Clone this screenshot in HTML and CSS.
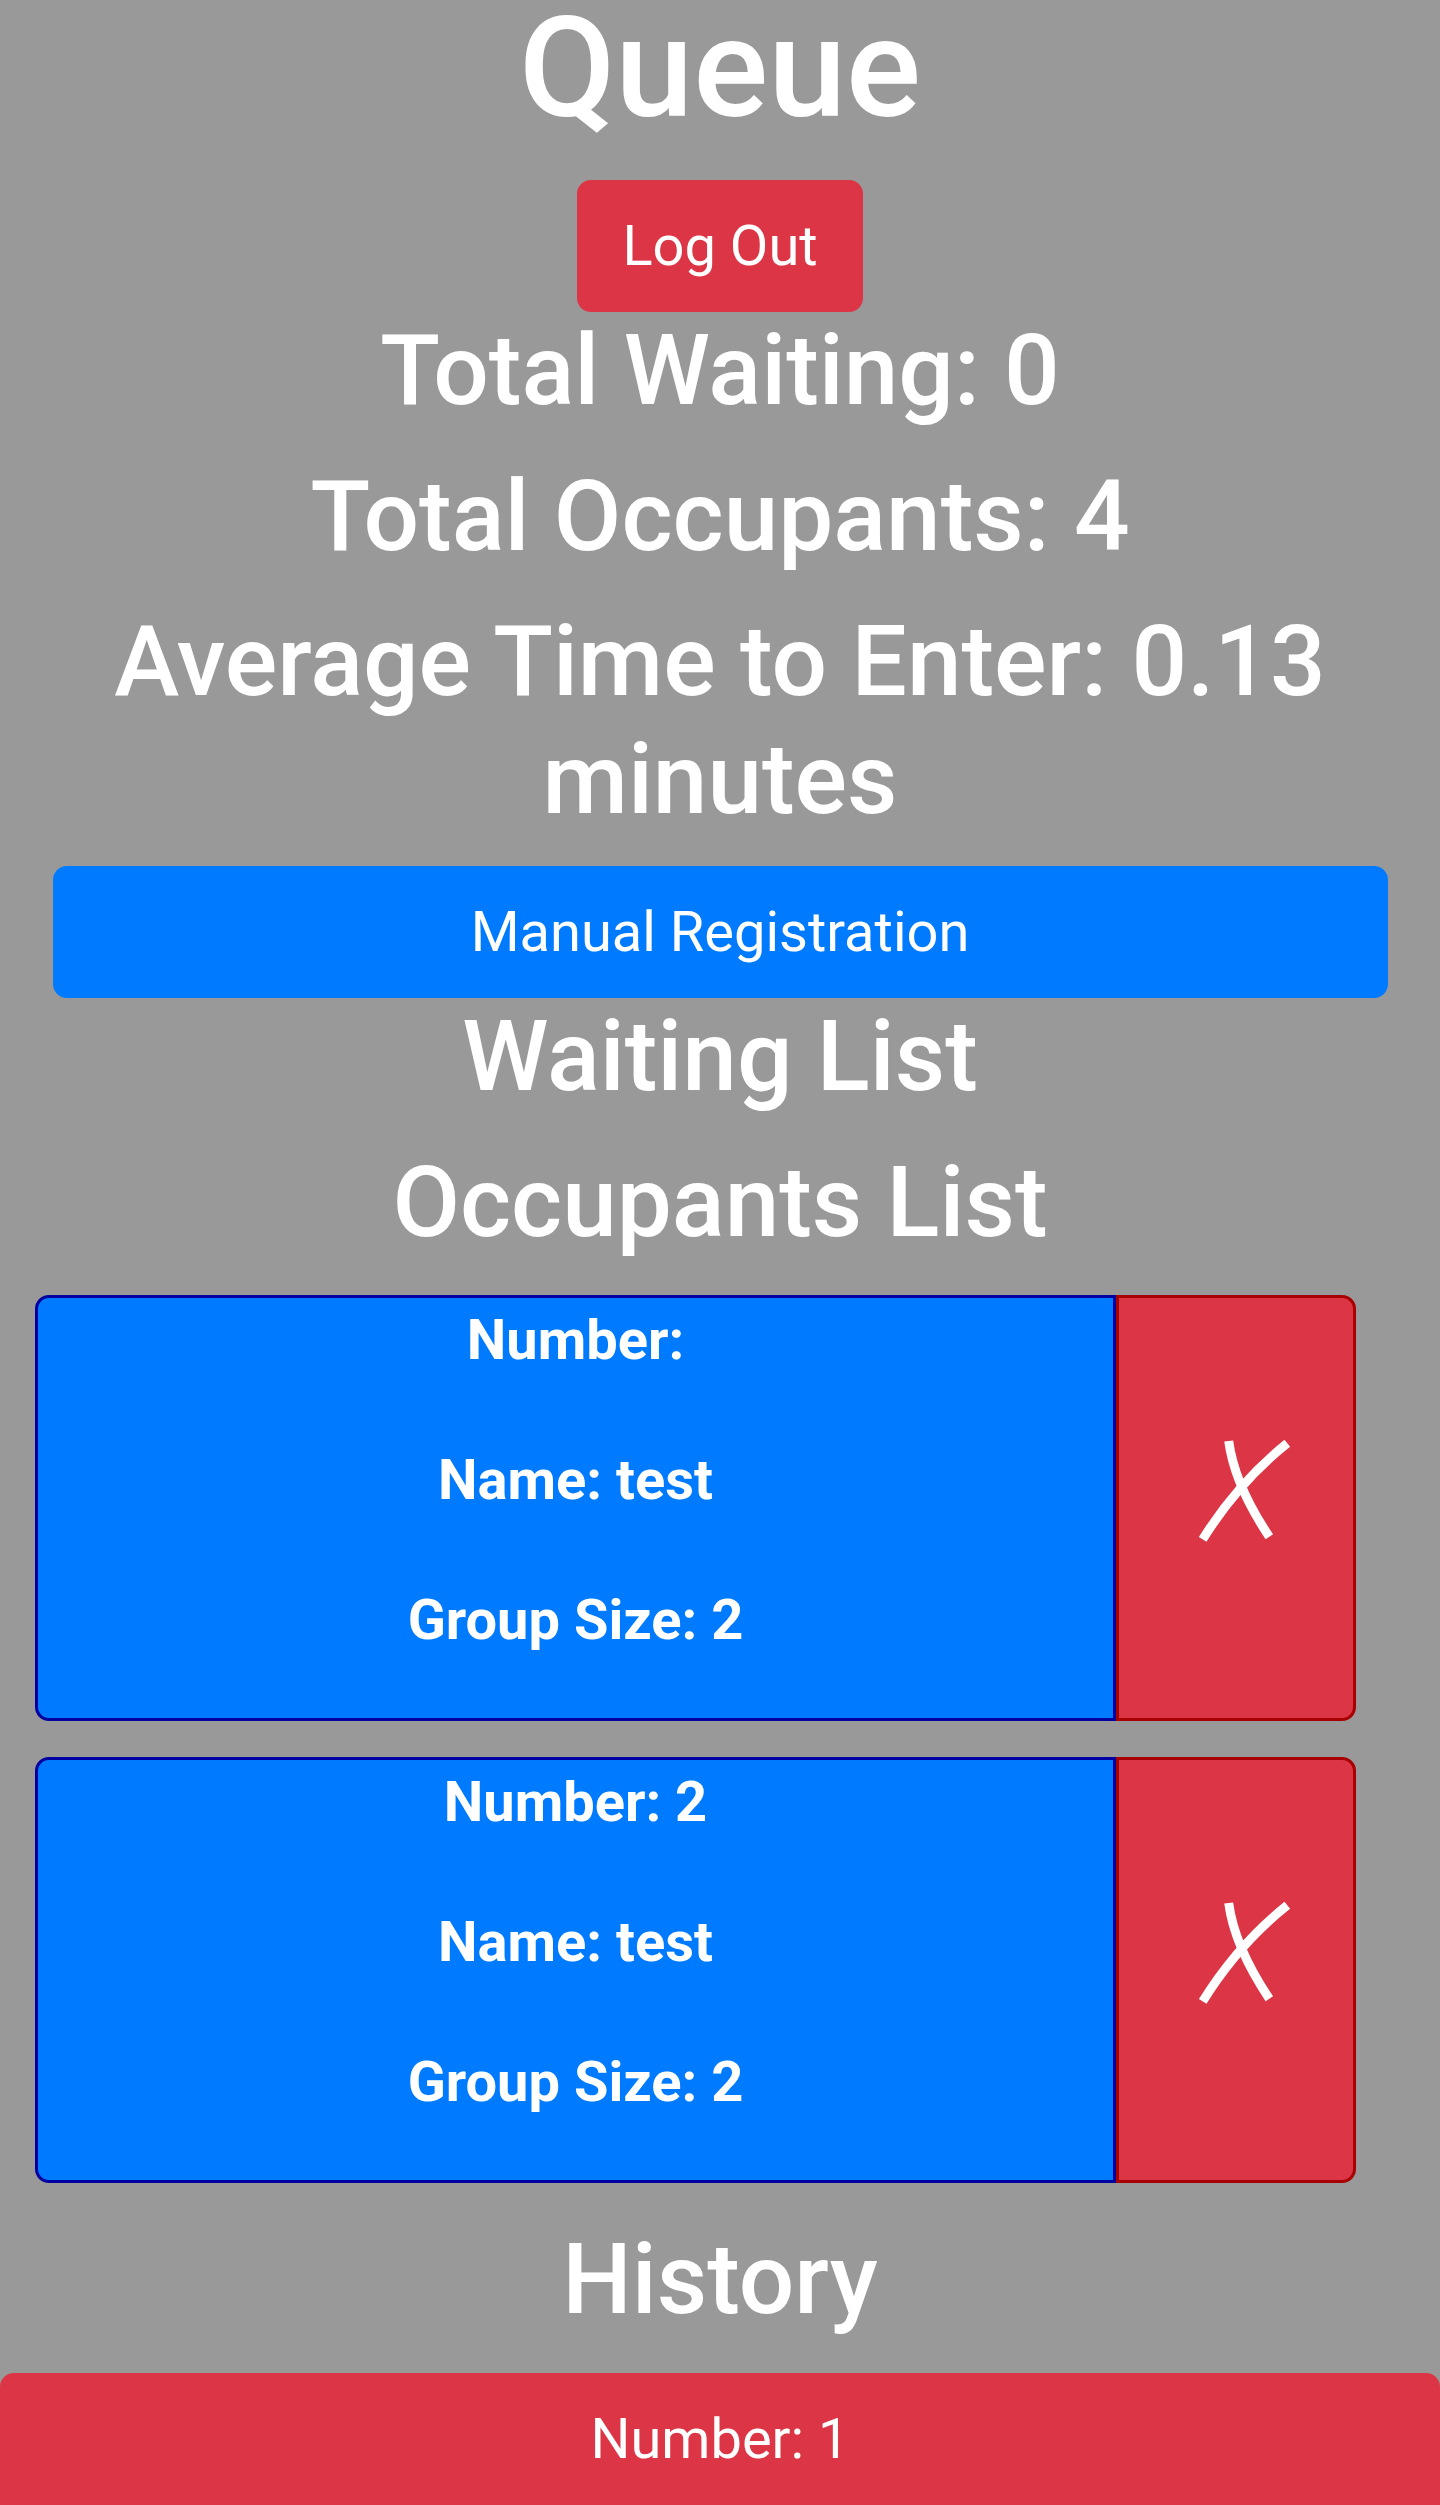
FILE: index.html
```html
<!DOCTYPE html>
<html lang="en">
<head>
<meta charset="utf-8">
<title>Queue</title>
<link rel="stylesheet" href="styles.css">
</head>
<body>
<main class="page">
  <h1 class="title">Queue</h1>
  <div class="logout-wrap"><button class="btn btn-danger">Log Out</button></div>
  <h3 class="heading">Total Waiting: 0</h3>
  <h3 class="heading">Total Occupants: 4</h3>
  <h3 class="heading">Average Time to Enter: 0.13 minutes</h3>
  <div class="container">
    <button class="btn btn-primary btn-block">Manual Registration</button>
  </div>
  <h3 class="heading">Waiting List</h3>
  <h3 class="heading">Occupants List</h3>
  <div class="occupants">
    <div class="card">
      <div class="card-info">
        <p>Number: </p>
        <p>Name: test</p>
        <p>Group Size: 2</p>
      </div>
      <div class="card-del">
        <svg class="x-icon" width="100" height="112" viewBox="0 0 100 112" aria-hidden="true">
          <path d="M33.7 5 Q39.4 48.5 74.3 100.7" />
          <path d="M92.3 7.3 Q43.4 46.1 7.7 103.3" />
        </svg>
      </div>
    </div>
    <div class="card">
      <div class="card-info">
        <p>Number: 2</p>
        <p>Name: test</p>
        <p>Group Size: 2</p>
      </div>
      <div class="card-del">
        <svg class="x-icon" width="100" height="112" viewBox="0 0 100 112" aria-hidden="true">
          <path d="M33.7 5 Q39.4 48.5 74.3 100.7" />
          <path d="M92.3 7.3 Q43.4 46.1 7.7 103.3" />
        </svg>
      </div>
    </div>
  </div>
  <h3 class="heading">History</h3>
  <div class="history">
    <div class="history-item">
      <p>Number: 1</p>
    </div>
  </div>
</main>
</body>
</html>
```

FILE: styles.css
```css
html, body {
  margin: 0;
  padding: 0;
}

body {
  background: #999999;
  color: #ffffff;
  font-family: Roboto, "Noto Sans", "Liberation Sans", sans-serif;
  font-size: 56px;
  line-height: 1.5;
  text-align: center;
  overflow: hidden;
}

.page {
  display: block;
}

.title {
  font-size: 140px;
  line-height: 136px;
  font-weight: 500;
  margin: 0 0 44px;
}

.heading {
  font-size: 98px;
  line-height: 1.2;
  font-weight: 500;
  margin: 0 0 28px;
}

.logout-wrap {
  display: block;
}

.btn {
  display: inline-block;
  font-family: inherit;
  font-size: 56px;
  line-height: 84px;
  font-weight: 400;
  color: #ffffff;
  padding: 21px 42px;
  border: 3.5px solid transparent;
  border-radius: 14px;
  cursor: pointer;
  vertical-align: top;
}

.btn-danger {
  background: #dc3545;
  border-color: #dc3545;
}

.btn-primary {
  background: #007bff;
  border-color: #007bff;
}

.btn-block {
  display: block;
  width: 100%;
}

.container {
  padding: 0 52.5px;
}

.occupants {
  padding: 5.5px 0 1.5px;
}

.card {
  display: flex;
  margin: 0 0 36px 35px;
  width: 1321px;
}

.card-info {
  flex: 0 0 1081px;
  box-sizing: border-box;
  background: #007bff;
  border: 3.5px solid #0000a0;
  border-radius: 14px 0 0 14px;
  font-weight: 700;
}

.card-info p {
  margin: 0 0 56px;
  line-height: 84px;
}

.card-del {
  flex: 1 1 auto;
  box-sizing: border-box;
  background: #dc3545;
  border: 3.5px solid #a80000;
  border-radius: 0 14px 14px 0;
  display: flex;
  align-items: center;
  justify-content: center;
}

.x-icon {
  margin: -33px 0 0 18px;
  fill: none;
  stroke: #ffffff;
  stroke-width: 9;
  stroke-linecap: butt;
}

.history {
  padding-top: 7px;
}

.history-item {
  background: #dc3545;
  border: 3.5px solid #dc3545;
  border-radius: 14px;
  padding: 21px 42px;
  min-height: 300px;
}

.history-item p {
  margin: 0;
  line-height: 84px;
}
```
